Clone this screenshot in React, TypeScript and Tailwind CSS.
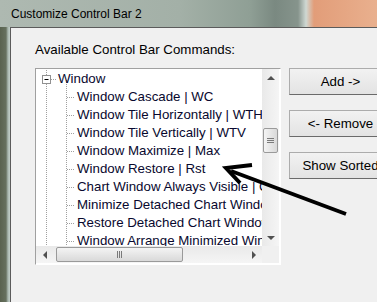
import React from "react";

const ITEMS = [
  "Window Cascade | WC",
  "Window Tile Horizontally | WTH",
  "Window Tile Vertically | WTV",
  "Window Maximize | Max",
  "Window Restore | Rst",
  "Chart Window Always Visible | Chart",
  "Minimize Detached Chart Windows | MDC",
  "Restore Detached Chart Windows | RDC",
  "Window Arrange Minimized Windows | WAM",
];

function RootGuide() {
  return (
    <svg width="22" height="18" className="shrink-0 overflow-visible">
      <line x1="10.5" y1="0" x2="10.5" y2="18" stroke="#a0a0a0" strokeDasharray="1 1" />
      <line x1="15" y1="9.5" x2="21" y2="9.5" stroke="#a0a0a0" strokeDasharray="1 1" />
      <line x1="30.5" y1="10" x2="30.5" y2="18" stroke="#a0a0a0" strokeDasharray="1 1" />
      <rect x="6.5" y="5.5" width="8" height="8" fill="#fff" stroke="#919191" />
      <line x1="8.5" y1="9.5" x2="12.5" y2="9.5" stroke="#000" />
    </svg>
  );
}

function ChildGuide() {
  return (
    <svg width="41" height="18" className="shrink-0">
      <line x1="10.5" y1="0" x2="10.5" y2="18" stroke="#a0a0a0" strokeDasharray="1 1" />
      <line x1="30.5" y1="0" x2="30.5" y2="18" stroke="#a0a0a0" strokeDasharray="1 1" />
      <line x1="31" y1="9.5" x2="39" y2="9.5" stroke="#a0a0a0" strokeDasharray="1 1" />
    </svg>
  );
}

function Arrow({ dir }: { dir: "up" | "down" | "left" | "right" }) {
  const pts = {
    up: "5,2 9,6 1,6",
    down: "1,2 9,2 5,6",
    left: "6,1 6,9 2,5",
    right: "2,1 2,9 6,5",
  }[dir];
  const w = dir === "up" || dir === "down" ? 10 : 8;
  const h = dir === "up" || dir === "down" ? 8 : 10;
  return (
    <svg width={w} height={h} viewBox={`0 0 ${w} ${h}`}>
      <polygon points={pts} fill="#505050" />
    </svg>
  );
}

function Button({ label }: { label: string }) {
  return (
    <div className="h-[27px] w-[103px] flex items-center justify-center bg-gradient-to-b from-[#f2f2f2] to-[#e3e3e3] border border-[#acacac] border-b-[#6a6a6a] text-[13.3px] text-black whitespace-nowrap">
      {label}
    </div>
  );
}

export default function App() {
  return (
    <div className="relative w-[377px] h-[302px] overflow-hidden font-['Liberation_Sans',Arial,sans-serif] bg-[#f0f0f0]">
      {/* title bar, blurred glass */}
      <div className="h-[27px] flex items-center pl-[11px] bg-[linear-gradient(to_right,#aeb9b1_0px,#a3b0a7_180px,#8f9f95_250px,#7a8981_275px,#86948c_298px,#cfd8d3_306px,#e29d79_314px,#e9b08e_377px)] text-[12px] text-black">
        Customize Control Bar 2
      </div>

      <div className="flex h-[275px]">
        {/* left frame */}
        <div className="w-[10px] shrink-0 bg-[linear-gradient(to_right,#59624f_0px,#66705e_6px,#a9b8b0_8px,#c3cfc9_10px)]" />

        {/* client */}
        <div className="flex-1 min-w-0 overflow-hidden border-t border-l border-[#5b5b5b] bg-[#f0f0f0] pl-[24px] pt-[14px]">
          <div className="text-[13.3px] leading-[16px] text-black whitespace-nowrap">Available Control Bar Commands:</div>

          <div className="flex gap-[8px] mt-[10px]">
            {/* tree view */}
            <div className="w-[246px] shrink-0 h-[197px] border border-[#a0a0a0] border-r-[#ffffff] border-b-[#ffffff] bg-white flex flex-col">
              <div className="flex h-[177px]">
                <div className="w-[226px] overflow-hidden pt-[1px] text-[13.3px] text-[#08082e] whitespace-nowrap">
                  <div className="flex items-center h-[18px]">
                    <RootGuide />
                    <span>Window</span>
                  </div>
                  {ITEMS.map((t) => (
                    <div key={t} className="flex items-center h-[18px]">
                      <ChildGuide />
                      <span>{t}</span>
                    </div>
                  ))}
                </div>
                {/* vertical scrollbar */}
                <div className="w-[17px] bg-gradient-to-r from-[#e9e9e9] to-[#f5f5f5] flex flex-col items-center">
                  <div className="h-[17px] flex items-center justify-center">
                    <Arrow dir="up" />
                  </div>
                  <div className="mt-[42px] w-[15px] h-[25px] rounded-[2px] border border-[#9a9a9a] bg-gradient-to-r from-[#f4f4f4] to-[#d9d9d9] flex flex-col items-center justify-center gap-[1px]">
                    <div className="w-[7px] h-[1px] bg-[#7a7a7a]" />
                    <div className="w-[7px] h-[1px] bg-[#7a7a7a]" />
                    <div className="w-[7px] h-[1px] bg-[#7a7a7a]" />
                  </div>
                  <div className="mt-auto h-[17px] flex items-center justify-center">
                    <Arrow dir="down" />
                  </div>
                </div>
              </div>
              {/* horizontal scrollbar */}
              <div className="flex h-[17px]">
                <div className="w-[226px] bg-gradient-to-b from-[#e9e9e9] to-[#f5f5f5] flex items-center">
                  <div className="w-[17px] flex items-center justify-center">
                    <Arrow dir="left" />
                  </div>
                  <div className="ml-[3px] w-[127px] h-[15px] rounded-[2px] border border-[#9a9a9a] bg-gradient-to-b from-[#f4f4f4] to-[#d9d9d9] flex items-center justify-center gap-[1px]">
                    <div className="w-[1px] h-[7px] bg-[#7a7a7a]" />
                    <div className="w-[1px] h-[7px] bg-[#7a7a7a]" />
                    <div className="w-[1px] h-[7px] bg-[#7a7a7a]" />
                  </div>
                  <div className="ml-auto w-[17px] flex items-center justify-center">
                    <Arrow dir="right" />
                  </div>
                </div>
                <div className="w-[17px] bg-[#f0f0f0]" />
              </div>
            </div>

            {/* buttons */}
            <div className="flex flex-col gap-[15px] shrink-0">
              <Button label="Add ->" />
              <Button label="<- Remove" />
              <Button label="Show Sorted" />
            </div>
          </div>
        </div>
      </div>

      {/* annotation arrow */}
      <svg className="absolute inset-0 pointer-events-none" width="377" height="302">
        <line x1="346" y1="214" x2="231" y2="171" stroke="#000" strokeWidth="4" />
        <polyline points="252,165 226,168 240,183" fill="none" stroke="#000" strokeWidth="4" strokeLinejoin="miter" />
      </svg>
    </div>
  );
}
